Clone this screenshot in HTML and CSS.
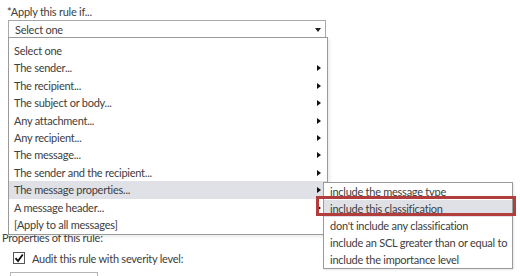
FILE: index.html
```html
<!DOCTYPE html>
<html>
<head>
<meta charset="utf-8">
<link rel="stylesheet" href="styles.css">
</head>
<body>
<div class="page">
  <div class="label">*Apply this rule if...</div>
  <div class="select"><span>Select one</span><span class="caret"></span></div>
  <div class="props">Properties of this rule:</div>
  <div class="audit">
    <span class="cb"><svg width="10" height="10" viewBox="0 0 10 10"><path d="M1.5 5.2 L4 8 L8.8 1.5" fill="none" stroke="#111" stroke-width="1.8"/></svg></span>
    <span>Audit this rule with severity level:</span>
  </div>
  <div class="sev"></div>

  <ul class="menu">
    <li>Select one</li>
    <li class="has">The sender...</li>
    <li class="has">The recipient...</li>
    <li class="has">The subject or body...</li>
    <li class="has">Any attachment...</li>
    <li class="has">Any recipient...</li>
    <li class="has">The message...</li>
    <li class="has">The sender and the recipient...</li>
    <li class="has active">The message properties...</li>
    <li class="has">A message header...</li>
    <li>[Apply to all messages]</li>
  </ul>

  <ul class="submenu">
    <li>include the message type</li>
    <li class="active">include this classification</li>
    <li>don't include any classification</li>
    <li>include an SCL greater than or equal to</li>
    <li>include the importance level</li>
  </ul>

  <div class="mark"></div>
</div>
</body>
</html>
```

FILE: styles.css
```css
html, body {
  margin: 0;
  padding: 0;
  background: #fff;
}
body {
  font-family: Lato, "Open Sans", sans-serif;
  font-size: 11px;
  letter-spacing: -0.25px;
  color: #404040;
  width: 520px;
  height: 276px;
  overflow: hidden;
}
.page {
  position: relative;
  width: 520px;
  height: 276px;
  overflow: hidden;
}
.label {
  padding: 3px 0 0 7px;
  line-height: 17px;
  height: 17px;
}
.select {
  margin-left: 8px;
  width: 318px;
  height: 18px;
  box-sizing: border-box;
  border: 1px solid #a9a9a9;
  display: flex;
  align-items: center;
  justify-content: space-between;
  padding: 0 4px 0 6px;
}
.caret {
  width: 0;
  height: 0;
  border-left: 3px solid transparent;
  border-right: 3px solid transparent;
  border-top: 4px solid #222;
  margin-top: 2px;
}
.props {
  margin-top: 191px;
  padding-left: 2px;
  line-height: 17px;
  height: 17px;
}
.audit {
  margin-top: 3px;
  height: 18px;
  display: flex;
  align-items: center;
  padding-left: 13px;
  gap: 7px;
}
.cb {
  width: 12px;
  height: 12px;
  box-sizing: border-box;
  border: 1px solid #555;
  display: flex;
  align-items: center;
  justify-content: center;
}
.sev {
  margin: 5px 0 0 10px;
  width: 88px;
  height: 4px;
  box-sizing: border-box;
  border: 1px solid #b5b5b5;
  border-bottom: none;
}
.menu {
  position: absolute;
  left: 8px;
  top: 37px;
  width: 320px;
  margin: 0;
  padding: 4px 0 1px;
  list-style: none;
  box-sizing: border-box;
  border: 1px solid #9a9a9a;
  background: #fff;
  box-shadow: 2px 2px 3px rgba(0,0,0,0.08);
}
.menu li {
  height: 17.4px;
  line-height: 17.4px;
  padding-left: 5px;
  position: relative;
  white-space: nowrap;
}
.menu li.has::after {
  content: "";
  position: absolute;
  right: 6px;
  top: 6px;
  width: 0;
  height: 0;
  border-top: 3px solid transparent;
  border-bottom: 3px solid transparent;
  border-left: 4px solid #111;
}
.menu li.active {
  background: #dfe1e7;
}
.submenu {
  position: absolute;
  left: 323px;
  top: 182px;
  width: 190px;
  margin: 0;
  padding: 0;
  list-style: none;
  box-sizing: border-box;
  border: 1px solid #9a9a9a;
  background: #fff;
  box-shadow: 1px 1px 2px rgba(0,0,0,0.1);
}
.submenu li {
  height: 17px;
  line-height: 17px;
  padding-left: 6px;
  white-space: nowrap;
}
.submenu li.active {
  background: #dfe1e7;
}
.mark {
  position: absolute;
  left: 316px;
  top: 196px;
  width: 200px;
  height: 20px;
  box-sizing: border-box;
  border: 3px solid #b13d3d;
}
```
